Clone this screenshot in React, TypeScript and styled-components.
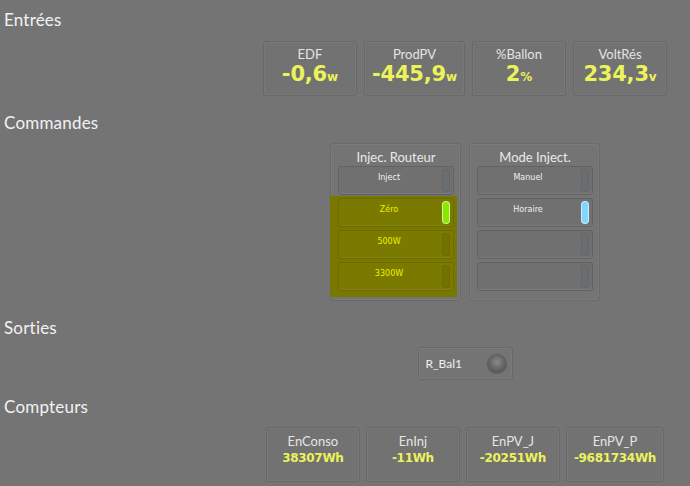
import React from 'react';
import styled, { createGlobalStyle } from 'styled-components';

const GlobalStyle = createGlobalStyle`
    html, body {
        margin: 0;
        padding: 0;
        background: #747474;
    }
    body {
        font-family: 'Lato', 'Open Sans', sans-serif;
        color: #f0f0f0;
    }
`;

const Page = styled.div`
    width: 690px;
    height: 486px;
    overflow: hidden;
    box-sizing: border-box;
    padding-top: 10px;
`;

const Heading = styled.div<{ $first?: boolean }>`
    font-size: 17px;
    line-height: 20px;
    height: 20px;
    padding-left: 4px;
    margin-top: ${(p) => (p.$first ? '0' : '17px')};
    color: #f2f2f2;
    letter-spacing: 0.2px;
`;

const Row = styled.div<{ $gap?: number; $top?: number }>`
    display: flex;
    justify-content: center;
    align-items: stretch;
    gap: ${(p) => p.$gap ?? 7}px;
    padding-left: 240px;
    margin-top: ${(p) => p.$top ?? 10}px;
`;

const Tile = styled.div<{ $small?: boolean }>`
    min-width: 94px;
    height: 55px;
    box-sizing: border-box;
    padding: ${(p) => (p.$small ? 5 : 4)}px 7px 0;
    border: 1px solid #686868;
    border-radius: 3px;
    background: #727272;
    box-shadow: inset 0 0 0 1px rgba(255, 255, 255, 0.05);
    display: flex;
    flex-direction: column;
    align-items: center;
`;

const TileLabel = styled.div`
    font-size: 13px;
    line-height: 16px;
    color: #e4e4e4;
`;

const Value = styled.div<{ $small?: boolean }>`
    font-family: 'DejaVu Sans', 'Liberation Sans', sans-serif;
    font-weight: bold;
    font-size: ${(p) => (p.$small ? 12 : 21)}px;
    line-height: ${(p) => (p.$small ? 18 : 24)}px;
    color: #ecf35a;
    letter-spacing: ${(p) => (p.$small ? -0.3 : -0.2)}px;
    white-space: nowrap;
`;

const Unit = styled.span`
    font-size: 12px;
    letter-spacing: 0;
`;

const Panel = styled.div`
    width: 131px;
    box-sizing: border-box;
    padding: 4px 6px 3px 7px;
    border: 1px solid #6a6a6a;
    border-radius: 3px;
    box-shadow: inset 0 0 0 1px rgba(255, 255, 255, 0.05);
    display: flex;
    flex-direction: column;
`;

const PanelTitle = styled.div`
    font-size: 13px;
    line-height: 18px;
    height: 18px;
    text-align: center;
    color: #eaeaea;
`;

const Group = styled.div`
    margin: 1px -3px 0 -8px;
    padding: 2px 3px 6px 8px;
    background: #787800;
    display: flex;
    flex-direction: column;
    gap: 3px;
`;

const Btn = styled.div<{ $inGroup?: boolean }>`
    position: relative;
    height: 29px;
    flex-shrink: 0;
    box-sizing: border-box;
    border: 1px solid ${(p) => (p.$inGroup ? '#6b6b00' : '#626262')};
    border-radius: 3px;
    background: ${(p) => (p.$inGroup ? '#7a7a00' : '#707070')};
    box-shadow: inset 0 -1px 0 rgba(255, 255, 255, 0.08);
    font-family: 'DejaVu Sans', sans-serif;
    font-size: 8px;
    line-height: 10px;
    padding-top: 6px;
    padding-right: 14px;
    text-align: center;
    color: ${(p) => (p.$inGroup ? '#eef000' : '#f0f0f0')};

    & + & {
        margin-top: 3px;
    }
    ${Group} & + & {
        margin-top: 0;
    }
`;

const Indicator = styled.span<{ $color?: string; $inGroup?: boolean }>`
    position: absolute;
    right: 3px;
    top: 2px;
    width: 8px;
    height: 23px;
    border-radius: 5px;
    box-sizing: border-box;
    background: ${(p) => p.$color ?? (p.$inGroup ? '#727200' : '#6b6e70')};
    border: 1px solid
        ${(p) => (p.$color ? 'rgba(255,255,255,0.6)' : 'rgba(0,0,0,0.06)')};
`;

const OutBox = styled.div`
    width: 95px;
    height: 33px;
    box-sizing: border-box;
    border: 1px solid #696969;
    border-radius: 3px;
    box-shadow: inset 0 0 0 1px rgba(255, 255, 255, 0.05);
    display: flex;
    align-items: center;
    justify-content: space-between;
    padding: 0 6px 0 7px;
    font-size: 12px;
    color: #f0f0f0;
`;

const Led = styled.span`
    width: 18px;
    height: 18px;
    border-radius: 50%;
    background: radial-gradient(circle at 50% 40%, #8a8a8a 0%, #5f5f5f 60%, #4a4a4a 100%);
    box-shadow: 0 0 0 1px #5a5a5a;
`;

const inputs = [
    { label: 'EDF', value: '-0,6', unit: 'w' },
    { label: 'ProdPV', value: '-445,9', unit: 'w' },
    { label: '%Ballon', value: '2', unit: '%' },
    { label: 'VoltRés', value: '234,3', unit: 'v' },
];

const counters = [
    { label: 'EnConso', value: '38307Wh' },
    { label: 'EnInj', value: '-11Wh' },
    { label: 'EnPV_J', value: '-20251Wh' },
    { label: 'EnPV_P', value: '-9681734Wh' },
];

const App: React.FC = () => {
    return (
        <Page>
            <GlobalStyle />
            <Heading $first>Entrées</Heading>
            <Row $top={11}>
                {inputs.map((t) => (
                    <Tile key={t.label}>
                        <TileLabel>{t.label}</TileLabel>
                        <Value>
                            {t.value}
                            <Unit>{t.unit}</Unit>
                        </Value>
                    </Tile>
                ))}
            </Row>

            <Heading>Commandes</Heading>
            <Row $gap={8}>
                <Panel>
                    <PanelTitle>Injec. Routeur</PanelTitle>
                    <Btn>
                        Inject
                        <Indicator />
                    </Btn>
                    <Group>
                        <Btn $inGroup>
                            Zéro
                            <Indicator $color="#88e800" />
                        </Btn>
                        <Btn $inGroup>
                            500W
                            <Indicator $inGroup />
                        </Btn>
                        <Btn $inGroup>
                            3300W
                            <Indicator $inGroup />
                        </Btn>
                    </Group>
                </Panel>
                <Panel>
                    <PanelTitle>Mode Inject.</PanelTitle>
                    <Btn>
                        Manuel
                        <Indicator />
                    </Btn>
                    <Btn>
                        Horaire
                        <Indicator $color="#7fd6ff" />
                    </Btn>
                    <Btn>
                        <Indicator />
                    </Btn>
                    <Btn>
                        <Indicator />
                    </Btn>
                </Panel>
            </Row>

            <Heading>Sorties</Heading>
            <Row $top={9}>
                <OutBox>
                    R_Bal1
                    <Led />
                </OutBox>
            </Row>

            <Heading>Compteurs</Heading>
            <Row $gap={6}>
                {counters.map((t) => (
                    <Tile key={t.label} $small>
                        <TileLabel>{t.label}</TileLabel>
                        <Value $small>{t.value}</Value>
                    </Tile>
                ))}
            </Row>
        </Page>
    );
};

export default App;
